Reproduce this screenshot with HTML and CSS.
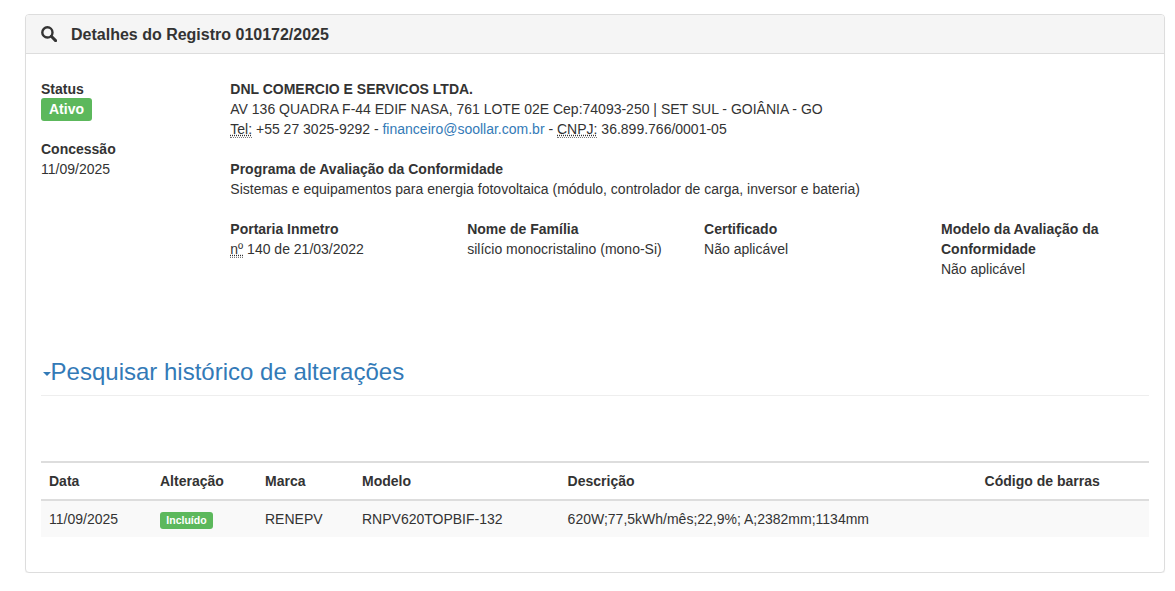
FILE: index.html
```html
<!DOCTYPE html>
<html lang="pt-BR">
<head>
<meta charset="utf-8">
<title>Detalhes do Registro 010172/2025</title>
<link rel="stylesheet" href="styles.css">
</head>
<body>
<section class="panel">
  <header class="panel-heading">
    <svg class="search-icon" viewBox="0 0 16 16" aria-hidden="true"><circle cx="6.4" cy="6.4" r="5.1" fill="none" stroke="#333" stroke-width="2.4"/><path d="M10.3 10.3 14.6 14.6" stroke="#333" stroke-width="3" stroke-linecap="round"/></svg>
    <h2 class="panel-title">Detalhes do Registro 010172/2025</h2>
  </header>
  <div class="panel-body">
    <div class="summary">
      <aside class="side">
        <div class="side-block">
          <strong>Status</strong>
          <div><span class="label label-lg">Ativo</span></div>
        </div>
        <div class="side-block">
          <strong>Concessão</strong>
          <div>11/09/2025</div>
        </div>
      </aside>
      <div class="details">
        <div class="block">
          <strong>DNL COMERCIO E SERVICOS LTDA.</strong><br>
          AV 136 QUADRA F-44 EDIF NASA, 761 LOTE 02E Cep:74093-250 | SET SUL - GOIÂNIA - GO<br>
          <abbr title="Telefone">Tel:</abbr> +55 27 3025-9292 - <a href="#">financeiro@soollar.com.br</a> - <abbr title="Cadastro Nacional da Pessoa Jurídica">CNPJ:</abbr> 36.899.766/0001-05
        </div>
        <div class="block">
          <strong>Programa de Avaliação da Conformidade</strong><br>
          Sistemas e equipamentos para energia fotovoltaica (módulo, controlador de carga, inversor e bateria)
        </div>
        <div class="facts">
          <div class="fact"><strong>Portaria Inmetro</strong><br><abbr title="número">nº</abbr> 140 de 21/03/2022</div>
          <div class="fact"><strong>Nome de Família</strong><br>silício monocristalino (mono-Si)</div>
          <div class="fact"><strong>Certificado</strong><br>Não aplicável</div>
          <div class="fact"><strong>Modelo da Avaliação da Conformidade</strong><br>Não aplicável</div>
        </div>
      </div>
    </div>
    <div class="page-header">
      <h3 class="section-title"><a href="#"><span class="caret"></span>Pesquisar histórico de alterações</a></h3>
    </div>
    <table class="table">
      <colgroup>
        <col class="c-data"><col class="c-alt"><col class="c-marca"><col class="c-modelo"><col class="c-desc"><col class="c-cod">
      </colgroup>
      <thead>
        <tr><th>Data</th><th>Alteração</th><th>Marca</th><th>Modelo</th><th>Descrição</th><th>Código de barras</th></tr>
      </thead>
      <tbody>
        <tr>
          <td>11/09/2025</td>
          <td><span class="label">Incluído</span></td>
          <td>RENEPV</td>
          <td>RNPV620TOPBIF-132</td>
          <td>620W;77,5kWh/mês;22,9%; A;2382mm;1134mm</td>
          <td></td>
        </tr>
      </tbody>
    </table>
  </div>
</section>
</body>
</html>
```
FILE: styles.css
```css
* { box-sizing: border-box; }
html, body { margin: 0; background: #fff; }
body {
  padding: 14px 10px 0 25px;
  font-family: "Liberation Sans", Arial, sans-serif;
  font-size: 14px;
  line-height: 20px;
  color: #333;
}
.panel {
  border: 1px solid #ddd;
  border-radius: 4px;
  box-shadow: 0 1px 1px rgba(0,0,0,.05);
  background: #fff;
}
.panel-heading {
  display: flex;
  align-items: center;
  gap: 14px;
  height: 39px;
  padding: 0 15px;
  background: #f5f5f5;
  border-bottom: 1px solid #ddd;
  border-radius: 3px 3px 0 0;
}
.search-icon { width: 16px; height: 16px; flex: none; }
.panel-title { margin: 2px 0 0; font-size: 16px; font-weight: bold; line-height: 18px; }
.panel-body { padding: 25px 15px 15px; }
.summary { display: flex; }
.side { width: 189.3px; flex: none; }
.side-block { margin-bottom: 18px; }
.details { flex: 1; min-width: 0; }
.block { margin-bottom: 20px; }
.facts { display: grid; grid-template-columns: repeat(4, 236.9px); gap: 0; }
.fact { padding-right: 15px; }
abbr { border-bottom: 1px dotted #777; cursor: help; }
a { color: #337ab7; text-decoration: none; }
.label {
  display: inline-block;
  padding: 3px 6.3px;
  font-size: 10.5px;
  line-height: 11px;
  font-weight: bold;
  color: #fff;
  background: #5cb85c;
  border-radius: 3px;
  vertical-align: baseline;
}
.label-lg { margin-top: -1px; padding: 4px 8px; font-size: 14px; line-height: 15px; vertical-align: top; }
.page-header { margin: 80px 0 65px; padding-bottom: 10px; border-bottom: 1px solid #eee; }
.section-title { margin: 0; font-size: 24px; font-weight: normal; line-height: 26.4px; }
.caret {
  display: inline-block;
  width: 0;
  height: 0;
  margin-left: 2px;
  margin-right: -0.4px;
  vertical-align: middle;
  border-top: 4px solid;
  border-right: 4px solid transparent;
  border-left: 4px solid transparent;
}
.table { width: 100%; border-collapse: collapse; table-layout: fixed; margin-bottom: 20px; }
.c-data { width: 111px; }
.c-alt { width: 105px; }
.c-marca { width: 97px; }
.c-modelo { width: 205.6px; }
.c-desc { width: 417px; }
.table th, .table td { padding: 8px; text-align: left; vertical-align: top; }
.table thead th { border-top: 2px solid #ddd; border-bottom: 2px solid #ddd; }
.table tbody tr { background: #f9f9f9; }
```
